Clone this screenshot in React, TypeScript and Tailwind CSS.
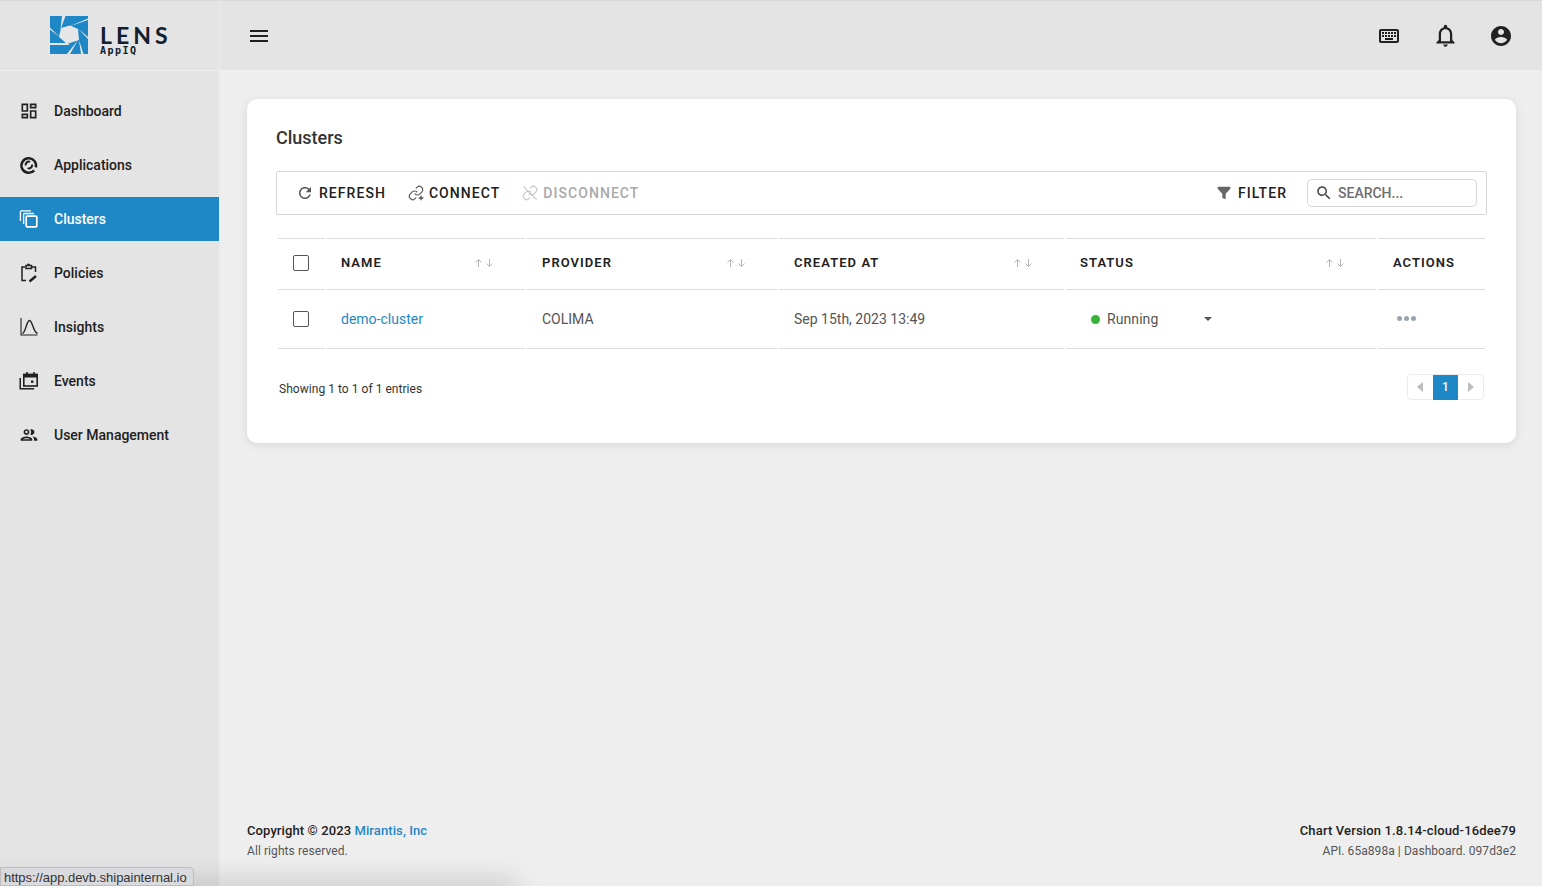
import type { ReactNode } from 'react';

const I = ({ d, className = 'w-5 h-5', box = '0 0 24 24' }: { d: string; className?: string; box?: string }) => (
  <svg viewBox={box} className={className} fill="currentColor">
    <path d={d} />
  </svg>
);

const Stroke = ({ children, className = 'w-5 h-5' }: { children: ReactNode; className?: string }) => (
  <svg viewBox="0 0 20 20" className={className} fill="none" stroke="currentColor" strokeWidth="1.6">
    {children}
  </svg>
);

const CHAIN = 'M10 13a5 5 0 0 0 7.54.54l3-3a5 5 0 0 0-7.07-7.07l-1.72 1.71M14 11a5 5 0 0 0-7.54-.54l-3 3a5 5 0 0 0 7.07 7.07l1.71-1.71';

const NAV = [
  {
    label: 'Dashboard',
    icon: <I d="M19 5v2h-4V5h4M9 5v6H5V5h4m10 8v6h-4v-6h4M9 17v2H5v-2h4M21 3h-8v6h8V3zM11 3H3v10h8V3zm10 8h-8v10h8V11zm-10 4H3v6h8v-6z" />,
  },
  {
    label: 'Applications',
    icon: (
      <Stroke>
        <path d="M15.2 15.4a7.3 7.3 0 1 1 1.6-3" strokeWidth="2.5" />
        <path d="M6.7 10.5a3.2 3.2 0 0 1 4.4-3.6M13 9.5a3.2 3.2 0 0 1-4.4 3.6" strokeWidth="2" />
      </Stroke>
    ),
  },
  {
    label: 'Clusters',
    icon: (
      <Stroke>
        <rect x="7.2" y="7.2" width="10.6" height="10.6" rx="1" strokeWidth="1.7" />
        <path d="M4.6 15V5.4a.9.9 0 0 1 .9-.9H15M1.4 12V2.8a.9.9 0 0 1 .9-.9H12" strokeWidth="1.3" />
      </Stroke>
    ),
  },
  {
    label: 'Policies',
    icon: (
      <Stroke>
        <path d="M6 4H3v13.5h4M13 4h3.5v5M7 2.5v3h5.5v-3h-2a1 1 0 0 0-1.5-1 1 1 0 0 0-.3 1z" strokeWidth="1.5" />
        <path d="M10.5 18.5l6.5-5.5" strokeWidth="2.4" />
      </Stroke>
    ),
  },
  {
    label: 'Insights',
    icon: (
      <Stroke>
        <path d="M2 1v17h16.5" strokeWidth="1.1" />
        <path d="M3.5 16.5C7 15 7.5 3.5 10.5 3.5s3.5 11.5 8 13" strokeWidth="1.4" />
      </Stroke>
    ),
  },
  {
    label: 'Events',
    icon: (
      <Stroke>
        <rect x="4.8" y="3.4" width="13.4" height="11.6" fill="none" strokeWidth="1.6" />
        <path d="M4.8 5h13.4" strokeWidth="3" />
        <path d="M8 1v3M15 1v3" strokeWidth="1.6" />
        <path d="M1.2 7v10.8h14" strokeWidth="1.5" />
        <rect x="12" y="9.5" width="2.4" height="2.4" fill="currentColor" stroke="none" />
      </Stroke>
    ),
  },
  {
    label: 'User Management',
    icon: <I d="M9 13.75c-2.34 0-7 1.17-7 3.5V19h14v-1.75c0-2.33-4.66-3.5-7-3.5zM4.34 17c.84-.58 2.87-1.25 4.66-1.25s3.82.67 4.66 1.25H4.34zM9 12c1.93 0 3.5-1.57 3.5-3.5S10.93 5 9 5 5.5 6.57 5.5 8.5 7.07 12 9 12zm0-5c.83 0 1.5.67 1.5 1.5S9.83 10 9 10s-1.5-.67-1.5-1.5S8.17 7 9 7zm7.04 6.81c1.16.84 1.96 1.96 1.96 3.44V19h4v-1.75c0-2.02-3.5-3.17-5.96-3.44zM15 12c1.93 0 3.5-1.57 3.5-3.5S16.93 5 15 5c-.54 0-1.04.13-1.5.35.63.89 1 1.98 1 3.15s-.37 2.26-1 3.15c.46.22.96.35 1.5.35z" />,
  },
];

const COLS = 'grid grid-cols-[47px_198px_250px_285px_310px_107px] gap-x-[2px]';

const SortArrows = () => (
  <svg viewBox="0 0 20 10" className="w-5 h-[10px] text-[#b5b5b5]" fill="none" stroke="currentColor" strokeWidth="1">
    <path d="M4.5 9V1.5M1.5 4.5l3-3 3 3M15.5 1v7.5M12.5 5.5l3 3 3-3" />
  </svg>
);

const Checkbox = () => <span className="block w-4 h-4 border border-[#555] rounded-[2px] bg-white" />;

const HeadCell = ({ label, pl = 'pl-[15px]' }: { label: string; pl?: string }) => (
  <div className={`border-y border-[#dcdcdc] flex items-center justify-between pb-[2px] pr-[31px] ${pl}`}>
    <span className="text-[13px] font-semibold tracking-[1.05px] text-[#212121]">{label}</span>
    <SortArrows />
  </div>
);

const BodyCell = ({ children, className = '' }: { children?: ReactNode; className?: string }) => (
  <div className={`border-b border-[#dcdcdc] flex items-center text-sm text-[#555] ${className}`}>{children}</div>
);

const ToolButton = ({ icon, label, disabled, gap = 'gap-[5px]' }: { icon: ReactNode; label: string; disabled?: boolean; gap?: string }) => (
  <span className={`flex items-center text-sm font-medium tracking-[1.05px] ${gap} ${disabled ? 'text-[#a9a9a9]' : 'text-[#212121]'}`}>
    {icon}
    {label}
  </span>
);

export default function App() {
  return (
    <div className="relative flex h-[886px] w-full overflow-hidden bg-[#eeeeee] font-['Roboto',sans-serif] text-[#212121]">
      <aside className="w-[220px] shrink-0 bg-[#e4e4e4] border-r border-[#ececec]">
        <div className="h-[71px] border-t border-[#d8d8d8] border-b border-b-[#f0f0f0] flex items-center pl-[50px] gap-3">
          {/* logo */}
          <svg viewBox="0 0 38 38" className="w-[38px] h-[38px] -mt-[1px]">
            <rect width="38" height="38" fill="#1e88c7" />
            <path
              d="M11 12L20 9.5L28 13L29 24L27.5 24.5L17 28L9 21Z M12 0H15.5L10.5 13.5Z M38 2.5V4L19 10.5Z M38 21V23L28.5 13Z M31 38H33.5L29 24Z M17 38H20L28 24Z M0 11.5L9.5 21L0 13.5Z M0 27H18L19 29H0Z"
              fill="#e6e6e6"
            />
          </svg>
          <div className="relative w-[70px] h-[38px] text-[#10202e]">
            <div className="absolute left-0 top-[8px] font-['Lato',sans-serif] text-[23px] leading-[20px] font-bold tracking-[4px]">LENS</div>
            <div className="absolute left-0 top-[29px] font-['DejaVu_Sans_Mono',monospace] text-[10px] leading-[10px] font-bold tracking-[1.5px]">AppIQ</div>
          </div>
        </div>
        <nav className="pt-[18px] flex flex-col gap-[10px]">
          {NAV.map((n) => (
            <div
              key={n.label}
              className={`h-[44px] flex items-center pl-[19px] gap-[15px] text-sm font-medium ${
                n.label === 'Clusters' ? 'bg-[#1e88c7] text-white' : 'text-[#212121]'
              }`}
            >
              {n.icon}
              {n.label}
            </div>
          ))}
        </nav>
      </aside>

      <div className="flex-1 flex flex-col min-w-0">
        <header className="h-[70px] shrink-0 bg-[#e4e4e4] border-t border-[#d8d8d8] flex items-center justify-between pl-[27px] pr-[29px]">
          <I d="M3 18h18v-2H3v2zm0-5h18v-2H3v2zm0-7v2h18V6H3z" className="w-6 h-6" />
          <div className="flex items-center gap-8">
            <I className="w-6 h-6" d="M20 7v10H4V7h16m0-2H4c-1.1 0-1.99.9-1.99 2L2 17c0 1.1.9 2 2 2h16c1.1 0 2-.9 2-2V7c0-1.1-.9-2-2-2zm-9 3h2v2h-2zm0 3h2v2h-2zM8 8h2v2H8zm0 3h2v2H8zm-3 0h2v2H5zm0-3h2v2H5zm3 6h8v2H8zm6-3h2v2h-2zm0-3h2v2h-2zm3 3h2v2h-2zm0-3h2v2h-2z" />
            <I className="w-[27px] h-[27px] -mx-[1.5px]" d="M12 22c1.1 0 2-.9 2-2h-4c0 1.1.9 2 2 2zm6-6v-5c0-3.07-1.63-5.64-4.5-6.32V4c0-.83-.67-1.5-1.5-1.5s-1.5.67-1.5 1.5v.68C7.64 5.36 6 7.92 6 11v5l-2 2v1h16v-1l-2-2zm-2 1H8v-6c0-2.48 1.51-4.5 4-4.5s4 2.02 4 4.5v6z" />
            <I className="w-6 h-6" d="M12 2C6.48 2 2 6.48 2 12s4.48 10 10 10 10-4.48 10-10S17.52 2 12 2zm0 3c1.66 0 3 1.34 3 3s-1.34 3-3 3-3-1.34-3-3 1.34-3 3-3zm0 14.2c-2.5 0-4.71-1.28-6-3.22.03-1.99 4-3.08 6-3.08 1.99 0 5.97 1.09 6 3.08-1.29 1.94-3.5 3.22-6 3.22z" />
          </div>
        </header>

        <main className="flex-1 flex flex-col justify-between pl-[27px] pr-[26px] pt-[29px] pb-[25px]">
          <section className="h-[344px] bg-white rounded-[10px] shadow-[0_2px_8px_rgba(0,0,0,0.1)] pt-[28px] pl-[29px] pr-[29px]">
            <h1 className="text-lg font-medium leading-[22px] text-[#333]">Clusters</h1>

            <div className="mt-[22px] h-[44px] border border-[#d6d6d6] rounded-[2px] flex items-center justify-between pl-[19px] pr-[9px]">
              <div className="flex items-center gap-[22px]">
                <ToolButton
                  label="REFRESH"
                  icon={<I className="w-[18px] h-[18px] text-[#555]" d="M17.65 6.35C16.2 4.9 14.21 4 12 4c-4.42 0-7.99 3.58-7.99 8s3.57 8 7.99 8c3.73 0 6.84-2.55 7.73-6h-2.08c-.82 2.33-3.04 4-5.65 4-3.31 0-6-2.69-6-6s2.69-6 6-6c1.66 0 3.14.69 4.22 1.78L13 11h7V4l-2.35 2.35z" />}
                />
                <ToolButton
                  label="CONNECT"
                  icon={
                    <svg viewBox="0 0 24 24" className="w-4 h-4 text-[#555]" fill="none" stroke="currentColor" strokeWidth="1.7">
                      <path d={CHAIN} />
                      <path d="M19.5 16v7M16 19.5h7" strokeWidth="2" />
                    </svg>
                  }
                />
                <ToolButton
                  disabled
                  label="DISCONNECT"
                  icon={
                    <svg viewBox="0 0 24 24" className="w-4 h-4 text-[#c4c4c4]" fill="none" stroke="currentColor" strokeWidth="1.6">
                      <path d={CHAIN} />
                      <path d="M2 2l20 20" />
                    </svg>
                  }
                />
              </div>
              <div className="flex items-center gap-[20px]">
                <ToolButton
                  label="FILTER"
                  gap="gap-[6px]"
                  icon={<I className="w-4 h-4 text-[#666]" d="M2.5 2.5h19v3L14.5 13v8.5l-5-2V13L2.5 5.5z" />}
                />
                <div className="w-[170px] h-[28px] border border-[#d6d6d6] rounded-[5px] flex items-center pl-[7px] gap-[5px] text-sm font-medium text-[#6e6e6e]">
                  <I
                    className="w-[18px] h-[18px] text-[#444]"
                    d="M15.5 14h-.79l-.28-.27C15.41 12.59 16 11.11 16 9.5 16 5.91 13.09 3 9.5 3S3 5.91 3 9.5 5.91 16 9.5 16c1.61 0 3.09-.59 4.23-1.57l.27.28v.79l5 4.99L20.49 19l-4.99-5zm-6 0C7.01 14 5 11.99 5 9.5S7.01 5 9.5 5 14 7.01 14 9.5 11.99 14 9.5 14z"
                  />
                  SEARCH...
                </div>
              </div>
            </div>

            <div className={`${COLS} mt-[23px] ml-[2px] h-[52px]`}>
              <div className="border-y border-[#dcdcdc] flex items-center justify-center pb-[2px] pr-[1px]">
                <Checkbox />
              </div>
              <HeadCell label="NAME" pl="pl-[14px]" />
              <HeadCell label="PROVIDER" />
              <HeadCell label="CREATED AT" />
              <HeadCell label="STATUS" pl="pl-[14px]" />
              <div className="border-y border-[#dcdcdc] flex items-center pl-[15px] pb-[2px]">
                <span className="text-[13px] font-semibold tracking-[1.05px]">ACTIONS</span>
              </div>
            </div>

            <div className={`${COLS} ml-[2px] h-[59px]`}>
              <BodyCell className="justify-center pr-[1px]">
                <Checkbox />
              </BodyCell>
              <BodyCell className="pl-[14px]">
                <span className="text-[#1e88c7]">demo-cluster</span>
              </BodyCell>
              <BodyCell className="pl-[15px]">COLIMA</BodyCell>
              <BodyCell className="pl-[15px]">Sep 15th, 2023 13:49</BodyCell>
              <BodyCell className="pl-[25px]">
                <span className="w-[9px] h-[9px] rounded-full bg-[#37b437] mr-[7px]" />
                <span className="tracking-[0.08px]">Running</span>
                <span className="ml-[46px] w-0 h-0 border-x-4 border-x-transparent border-t-4 border-t-[#555]" />
              </BodyCell>
              <BodyCell className="pl-[19px] gap-[2px] pb-[1px]">
                <span className="w-[5px] h-[5px] rounded-full bg-[#9aa5b1]" />
                <span className="w-[5px] h-[5px] rounded-full bg-[#9aa5b1]" />
                <span className="w-[5px] h-[5px] rounded-full bg-[#9aa5b1]" />
              </BodyCell>
            </div>

            <div className="mt-[25px] ml-[3px] mr-[3px] flex items-center justify-between">
              <span className="text-xs tracking-[0.04px] text-[#333] mt-[4px]">Showing 1 to 1 of 1 entries</span>
              <div className="flex h-[26px] w-[77px] border border-[#ececec] rounded-[4px] items-center">
                <span className="w-[25px] flex justify-center">
                  <span className="w-0 h-0 border-y-[5px] border-y-transparent border-r-[6px] border-r-[#bdbdbd]" />
                </span>
                <span className="w-[26px] h-[25px] bg-[#1e88c7] text-white text-xs font-medium flex items-center justify-center">1</span>
                <span className="w-[25px] flex justify-center">
                  <span className="w-0 h-0 border-y-[5px] border-y-transparent border-l-[6px] border-l-[#bdbdbd]" />
                </span>
              </div>
            </div>
          </section>

          <footer className="flex items-end justify-between">
            <div>
              <p className="text-[13px] font-medium leading-5 tracking-[0.1px]">
                Copyright © 2023 <span className="text-[#1e88c7]">Mirantis, Inc</span>
              </p>
              <p className="text-xs leading-5 tracking-[0.08px] text-[#555]">All rights reserved.</p>
            </div>
            <div className="text-right">
              <p className="text-[13px] font-medium leading-5 tracking-[0.15px]">Chart Version 1.8.14-cloud-16dee79</p>
              <p className="text-xs leading-5 tracking-[0.06px] text-[#555]">API. 65a898a | Dashboard. 097d3e2</p>
            </div>
          </footer>
        </main>
      </div>

      {/* shadow under the browser status bubble */}
      <div className="absolute -left-5 -bottom-[14px] h-5 w-[540px] rounded-full bg-black/15 blur-md" />
      <div className="absolute left-0 bottom-0 h-[19px] w-[194px] bg-[#d9dade] border border-[#bdbdbd] rounded-tr-[4px] pl-[3px] font-['Liberation_Sans',sans-serif] text-[13px] tracking-[-0.03px] leading-[19px] text-[#333]">
        https://app.devb.shipainternal.io
      </div>
    </div>
  );
}
